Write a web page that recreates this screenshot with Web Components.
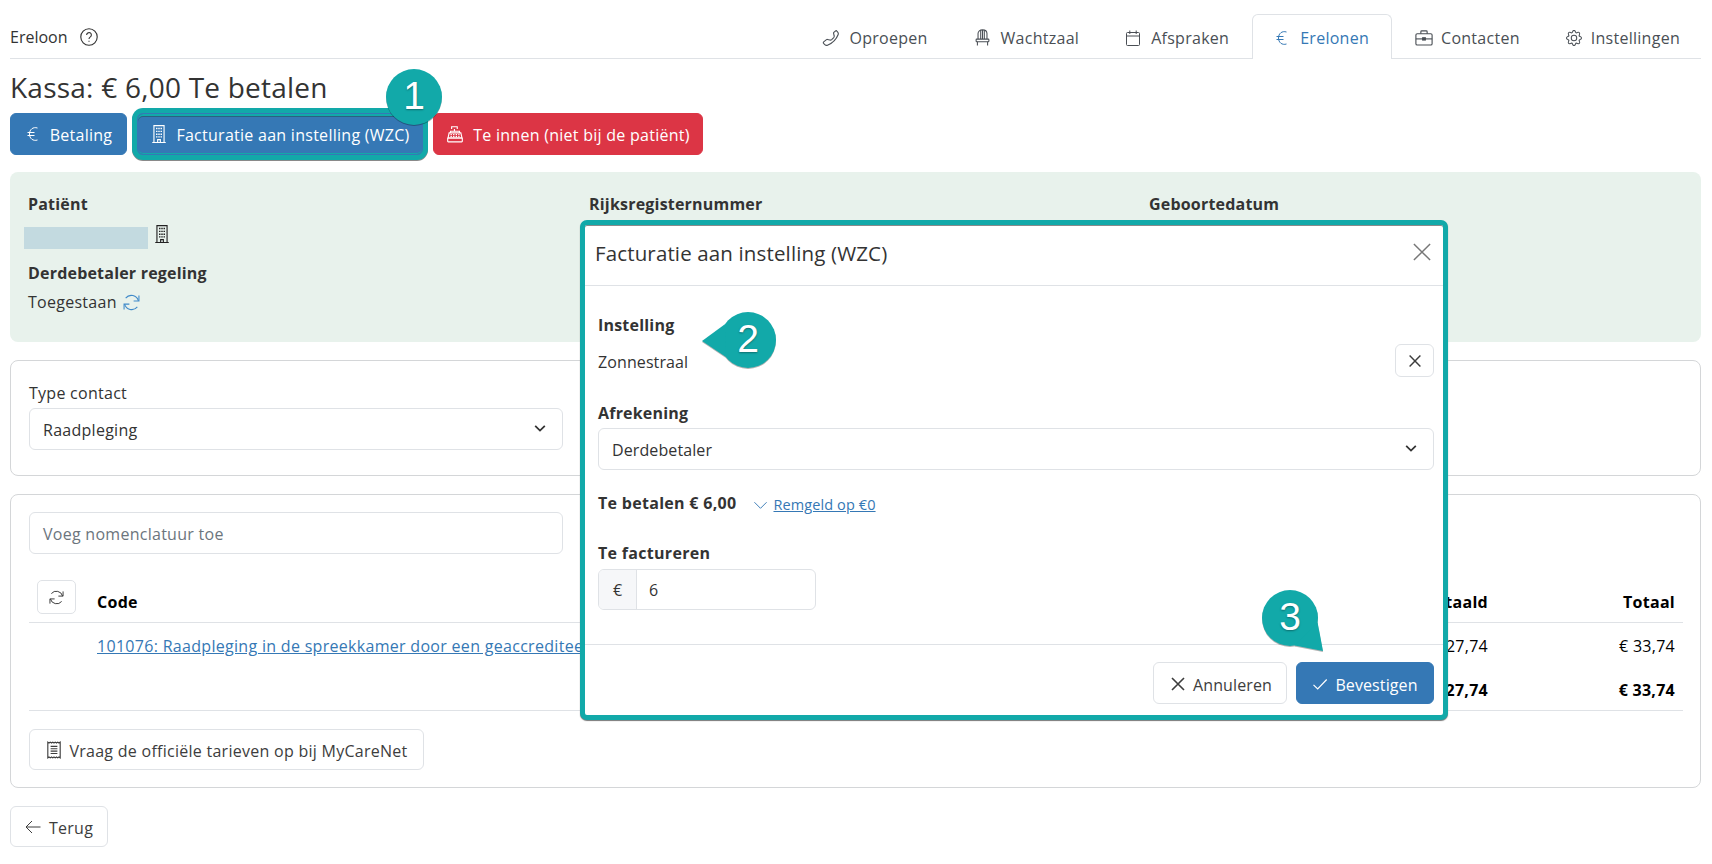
<!DOCTYPE html>
<html lang="nl">
<head>
<meta charset="utf-8">
<title>Ereloon</title>
<style>
    html, body { margin: 0; padding: 0; background: #fff; }
    body {
        position: relative;
        height: 864px;
        overflow: hidden;
        font: 16px/24px "Open Sans", "Noto Sans", sans-serif;
        letter-spacing: .27px;
        color: #333;
    }
</style>
</head>
<body>
<kassa-page></kassa-page>
<script>
const ICONS = {
    help: `<circle cx="8" cy="8" r="7.3"/><path d="M5.900 6.200a2.100 2.100 0 1 1 3.300 1.700c-.8.6-1.200 1-1.200 1.900"/><path d="M8 11.400v.9"/>`,
    phone: `<path transform="translate(16 0) scale(-1 1)" d="M3.300 1.400 2.200 2.500c-.7.7-.9 1.600-.6 2.400a17 17 0 0 0 9.500 9.500c.8.3 1.700.1 2.400-.6l1.100-1.100a.9.9 0 0 0-.1-1.300l-2.500-1.900a.9.9 0 0 0-.8-.2l-2.200.5a1.700 1.700 0 0 1-1.600-.4L5.600 7.600a1.700 1.700 0 0 1-.4-1.600l.5-2.200a.9.9 0 0 0-.2-.8L3.600 1.500a.2.2 0 0 0-.3-.1z"/>`,
    chair: `<path d="M3.800 9.500V4.300C3.800 2.200 5.600.8 8 .8s4.200 1.400 4.200 3.500v5.200"/><path d="M6.300 1.200v8.300M9.700 1.200v8.300M8 1v8.500"/><rect x="2" y="9.500" width="12" height="2.500" rx=".6"/><path d="M3.200 12v3.500M12.800 12v3.500"/>`,
    calendar: `<rect x="1.500" y="2.500" width="13" height="13" rx="1"/><path d="M1.500 6h13M4.800 .5v3.500M11.200 .5v3.500"/>`,
    euro: `<path d="M12.500 2C8 .6 4.500 3.500 4.500 8s3.500 7.400 8 6"/><path d="M2.500 6.500h7M2.500 9.500h7"/>`,
    briefcase: `<rect x=".8" y="4.200" width="14.400" height="10" rx="1.200"/><path d="M5.200 4.200V2.500c0-.5.3-.8.8-.8h4c.5 0 .8.3.8.8v1.700"/><path d="M.8 8.800h14.400"/><rect x="6.800" y="7.800" width="2.400" height="2" fill="currentColor"/>`,
    building: `<path d="M3.500 15.500V.5h9v15M2 15.500h12"/><path d="M6.800 15.500V13h2.400v2.500"/><path stroke-dasharray="1.300 1.200" stroke-width="1.300" d="M6 2.500v8.500M8 2.500v8.500M10 2.500v8.500"/>`,
    register: `<path d="M4 7V5.500h8V7"/><path d="M5 3.500v-2h5v2M7.500 3.500v2"/><path d="M2.800 7h10.400l1 4.500H1.800z"/><rect x="1.500" y="11.500" width="13" height="3.500" rx=".5"/><path stroke-dasharray="1.200 1.100" stroke-width="1.200" d="M4 8.600h8M4 10.300h8"/>`,
    refresh: `<path d="M14.500 6.500A6.900 6.900 0 0 0 2.500 3.800"/><path d="M1.500 9.500A6.900 6.900 0 0 0 13.500 12.200"/><path d="M15 1.500v5h-5M1 14.500v-5h5"/>`,
    receipt: `<path d="M2.500 1l1.100.8L4.700 1l1.100.8L6.900 1 8 1.800 9.100 1l1.100.8 1.100-.8 1.100.8 1.100-.8v14l-1.100-.8-1.100.8-1.100-.8-1.100.8-1.100-.8-1.100.8-1.100-.8-1.100.8-1.100-.8-1.100.8z"/><path d="M5 4.800h6M5 6.900h6M5 9h6M5 11.100h6"/>`,
    x: `<path stroke-width="1.300" d="M3.200 3.200l9.600 9.600M12.800 3.200l-9.600 9.600"/>`,
    "x-full": `<path stroke-width="1.300" d="M.8.8l14.400 14.400M15.200.8.800 15.200"/>`,
    check: `<path stroke-width="1.200" d="M1.500 8.800l4.200 4.200 9-9.500"/>`,
    "arrow-left": `<path d="M15.500 8H1M7 2 1 8l6 6"/>`,
    chevron: `<path d="M1.500 4.500 8 11l6.500-6.500"/>`,
    "chevron-bold": `<path stroke-width="2" d="M2.500 5.500 8 11l5.500-5.500"/>`,
    gear: `<path fill="currentColor" stroke="none" d="M8 4.754a3.246 3.246 0 1 0 0 6.492 3.246 3.246 0 0 0 0-6.492M5.754 8a2.246 2.246 0 1 1 4.492 0 2.246 2.246 0 0 1-4.492 0"/><path fill="currentColor" stroke="none" d="M9.796 1.343c-.527-1.790-3.065-1.790-3.592 0l-.094.319a.873.873 0 0 1-1.255.520l-.292-.160c-1.640-.892-3.433.902-2.540 2.541l.159.292a.873.873 0 0 1-.520 1.255l-.319.094c-1.790.527-1.790 3.065 0 3.592l.319.094a.873.873 0 0 1 .520 1.255l-.160.292c-.892 1.640.901 3.434 2.541 2.540l.292-.159a.873.873 0 0 1 1.255.520l.094.319c.527 1.790 3.065 1.790 3.592 0l.094-.319a.873.873 0 0 1 1.255-.520l.292.160c1.640.893 3.434-.902 2.540-2.541l-.159-.292a.873.873 0 0 1 .520-1.255l.319-.094c1.790-.527 1.790-3.065 0-3.592l-.319-.094a.873.873 0 0 1-.520-1.255l.160-.292c.893-1.640-.902-3.433-2.541-2.540l-.292.159a.873.873 0 0 1-1.255-.520zm-2.633.283c.246-.835 1.428-.835 1.674 0l.094.319a1.873 1.873 0 0 0 2.693 1.115l.291-.160c.764-.415 1.600.420 1.184 1.185l-.159.292a1.873 1.873 0 0 0 1.116 2.692l.318.094c.835.246.835 1.428 0 1.674l-.319.094a1.873 1.873 0 0 0-1.115 2.693l.160.291c.415.764-.420 1.600-1.185 1.184l-.291-.159a1.873 1.873 0 0 0-2.693 1.116l-.094.318c-.246.835-1.428.835-1.674 0l-.094-.319a1.873 1.873 0 0 0-2.692-1.115l-.292.160c-.764.415-1.600-.420-1.184-1.185l.159-.291A1.873 1.873 0 0 0 1.945 8.930l-.319-.094c-.835-.246-.835-1.428 0-1.674l.319-.094A1.873 1.873 0 0 0 3.060 4.377l-.160-.292c-.415-.764.420-1.600 1.185-1.184l.292.159a1.873 1.873 0 0 0 2.692-1.115z"/>`
};

class UiIcon extends HTMLElement {
    constructor() {
        super();
        this.attachShadow({ mode: "open" });
    }
    connectedCallback() {
        const size = this.getAttribute("size") || 16;
        const body = ICONS[this.getAttribute("name")] || "";
        this.shadowRoot.innerHTML = `<style>
            :host { display: inline-flex; flex: none; width: ${size}px; height: ${size}px; }
            svg { width: 100%; height: 100%; display: block; overflow: visible; }
        </style>
        <svg viewBox="0 0 16 16" fill="none" stroke="currentColor" stroke-width="1">${body}</svg>`;
    }
}
customElements.define("ui-icon", UiIcon);

class UiButton extends HTMLElement {
    constructor() {
        super();
        this.attachShadow({ mode: "open" });
    }
    connectedCallback() {
        const icon = this.getAttribute("icon");
        const gap = this.getAttribute("gap") || 8;
        const size = this.getAttribute("size") || 16;
        this.shadowRoot.innerHTML = `<style>
            :host {
                display: inline-flex;
                box-sizing: border-box;
                align-items: center;
                justify-content: center;
                gap: ${gap}px;
                height: 42px;
                padding: 2px 12px 0;
                border: 1px solid #dfe2e6;
                border-radius: 6px;
                background: #fff;
                color: #3d3d3d;
                white-space: nowrap;
            }
            :host([variant="primary"]) { background: #3578b5; border-color: #3578b5; color: #fff; }
            :host([variant="danger"]) { background: #dc3545; border-color: #dc3545; color: #fff; }
            :host([marked]) {
                box-shadow: inset 0 2px 0 #12a9a9, inset 0 3px 0 #2a6180, inset 0 -1px 0 #12a9a9,
                    0 0 0 5px #12a9a9, 0 1px 0 5px #8a8a8a;
            }
            ui-icon { margin-top: -2px; }
        </style>
        ${icon ? `<ui-icon name="${icon}" size="${size}"></ui-icon>` : ""}<slot></slot>`;
    }
}
customElements.define("ui-button", UiButton);

class NavTab extends HTMLElement {
    constructor() {
        super();
        this.attachShadow({ mode: "open" });
    }
    connectedCallback() {
        const gap = this.getAttribute("gap") || 10;
        this.shadowRoot.innerHTML = `<style>
            :host {
                display: flex;
                align-items: center;
                gap: ${gap}px;
                height: 44px;
                box-sizing: border-box;
                padding: 2px 22px 0 22px;
                margin-bottom: -1px;
                border: 1px solid transparent;
                border-bottom: 0;
                border-radius: 6px 6px 0 0;
                color: #4a4f55;
                white-space: nowrap;
            }
            :host([active]) {
                color: #3578b5;
                background: #fff;
                border-color: #dfe2e6;
                height: 45px;
                padding-left: 21px;
            }
        </style>
        <ui-icon name="${this.getAttribute("icon")}" size="${this.getAttribute("size") || 16}"></ui-icon><slot></slot>`;
    }
}
customElements.define("nav-tab", NavTab);

class TopBar extends HTMLElement {
    constructor() {
        super();
        this.attachShadow({ mode: "open" });
    }
    connectedCallback() {
        this.shadowRoot.innerHTML = `<style>
            :host {
                display: flex;
                justify-content: space-between;
                align-items: flex-end;
                height: 45px;
                box-sizing: content-box;
                border-bottom: 1px solid #dfe2e6;
            }
            .brand { display: flex; align-items: center; gap: 12px; height: 42px; letter-spacing: 0; color: #333; font-weight: 500; }
            nav { display: flex; margin-right: -2px; }
        </style>
        <div class="brand"><span>Ereloon</span><ui-icon name="help" size="18"></ui-icon></div>
        <nav><slot></slot></nav>`;
    }
}
customElements.define("top-bar", TopBar);

class InfoField extends HTMLElement {
    constructor() {
        super();
        this.attachShadow({ mode: "open" });
    }
    connectedCallback() {
        this.shadowRoot.innerHTML = `<style>
            :host { display: block; }
            .label { font-weight: 700; color: #333; letter-spacing: .2px; }
        </style>
        <div class="label">${this.getAttribute("label")}</div>
        <slot></slot>`;
    }
}
customElements.define("info-field", InfoField);

class PatientPanel extends HTMLElement {
    constructor() {
        super();
        this.attachShadow({ mode: "open" });
    }
    connectedCallback() {
        this.shadowRoot.innerHTML = `<style>
            :host {
                display: grid;
                grid-template-columns: 561px 560px 1fr;
                box-sizing: border-box;
                height: 170px;
                margin-top: 17px;
                padding: 20px 18px;
                border-radius: 8px;
                background: #e8f2ec;
            }
            .patient { display: flex; align-items: flex-start; gap: 5px; margin: 11px 0 12px -4px; height: 22px; color: #222; }
            .blur { width: 124px; height: 22px; background: #c3dae0; }
            .patient ui-icon { margin-top: -2px; }
            .status { display: flex; align-items: center; gap: 6px; margin-top: 5px; }
            .status ui-icon { color: #3f8ac9; }
        </style>
        <div>
            <info-field label="Patiënt">
                <div class="patient"><div class="blur"></div><ui-icon name="building" size="18"></ui-icon></div>
            </info-field>
            <info-field label="Derdebetaler regeling">
                <div class="status"><span>Toegestaan</span><ui-icon name="refresh" size="17"></ui-icon></div>
            </info-field>
        </div>
        <info-field label="Rijksregisternummer"></info-field>
        <info-field label="Geboortedatum"></info-field>`;
    }
}
customElements.define("patient-panel", PatientPanel);

class FormBox extends HTMLElement {
    constructor() {
        super();
        this.attachShadow({ mode: "open" });
    }
    connectedCallback() {
        const chevron = this.hasAttribute("select") ? `<ui-icon name="chevron-bold" size="14"></ui-icon>` : "";
        this.shadowRoot.innerHTML = `<style>
            :host {
                display: flex;
                align-items: center;
                justify-content: space-between;
                box-sizing: border-box;
                height: 42px;
                padding: 2px 15px 0 13px;
                border: 1px solid #dfe2e6;
                border-radius: 6px;
                background: #fff;
                color: #333;
            }
            :host([muted]) { color: #6c757d; }
            ui-icon { margin-top: -4px; }
        </style>
        <slot></slot>${chevron}`;
    }
}
customElements.define("form-box", FormBox);

class UiCard extends HTMLElement {
    constructor() {
        super();
        this.attachShadow({ mode: "open" });
    }
    connectedCallback() {
        this.shadowRoot.innerHTML = `<style>
            :host {
                display: block;
                box-sizing: border-box;
                padding: 17px 18px;
                border: 1px solid #d4d6d8;
                border-radius: 8px;
                background: #fff;
            }
        </style>
        <slot></slot>`;
    }
}
customElements.define("ui-card", UiCard);

class FeeTable extends HTMLElement {
    constructor() {
        super();
        this.attachShadow({ mode: "open" });
    }
    connectedCallback() {
        this.shadowRoot.innerHTML = `<style>
            :host {
                display: grid;
                grid-template-columns: 68px 1fr 200px 187px;
                grid-template-rows: 43px 45px 43px;
                margin: 26px -1px 0 0;
                color: #000;
            }
            .cell { display: flex; align-items: center; white-space: nowrap; overflow: hidden; }
            .head { align-items: flex-end; border-bottom: 1px solid #dfe2e6; font-weight: 700; padding-bottom: 8px; box-sizing: border-box; }
            .total { border-bottom: 1px solid #dfe2e6; font-weight: 700; padding-top: 2px; box-sizing: border-box; }
            .num { justify-content: flex-end; padding-right: 8px; }
            .tool { padding-left: 8px; align-items: flex-start; padding-bottom: 0; }
            .tool div {
                display: flex; align-items: center; justify-content: center;
                width: 39px; height: 34px; box-sizing: border-box;
                border: 1px solid #dfe2e6; border-radius: 5px; color: #333;
            }
            a { color: #3578b5; text-decoration: underline; letter-spacing: .3px; }
        </style>
        <div class="cell head tool"><div><ui-icon name="refresh" size="15"></ui-icon></div></div>
        <div class="cell head">Code</div>
        <div class="cell head num">Terugbetaald</div>
        <div class="cell head num">Totaal</div>
        <div class="cell"></div>
        <div class="cell"><a>101076: Raadpleging in de spreekkamer door een geaccrediteerde huisarts</a></div>
        <div class="cell num">€ 27,74</div>
        <div class="cell num">€ 33,74</div>
        <div class="cell total"></div>
        <div class="cell total"></div>
        <div class="cell total num">€ 27,74</div>
        <div class="cell total num">€ 33,74</div>`;
    }
}
customElements.define("fee-table", FeeTable);

class InvoiceModal extends HTMLElement {
    constructor() {
        super();
        this.attachShadow({ mode: "open" });
    }
    connectedCallback() {
        this.shadowRoot.innerHTML = `<style>
            :host {
                position: absolute;
                left: 580px;
                top: 220px;
                width: 868px;
                height: 500px;
                box-sizing: border-box;
                display: flex;
                flex-direction: column;
                border: 5px solid #12a9a9;
                border-radius: 7px;
                background: #fff;
                letter-spacing: .1px;
                box-shadow: inset 0 1px 0 #8a8a8a, 0 1px 1px #777;
            }
            header {
                display: flex;
                align-items: center;
                justify-content: space-between;
                box-sizing: border-box;
                height: 61px;
                padding: 0 12px 4px 10px;
                border-bottom: 1px solid #dfe2e6;
                font-size: 20.500px;
                letter-spacing: .14px;
                color: #333;
            }
            header ui-icon { color: #777; margin-top: -3px; }
            main { flex: 1; padding: 27px 9px 0 13px; }
            b { display: block; font-weight: 700; letter-spacing: .2px; }
            .row { display: flex; align-items: center; justify-content: space-between; margin-top: 7px; height: 33px; }
            .row span { padding-top: 3px; }
            .square { width: 39px; height: 33px; padding: 0; }
            .square ui-icon { margin: 0; }
            .afrekening { margin-top: 24px; }
            .afrekening b { margin-bottom: 3px; }
            .pay { display: flex; align-items: center; margin-top: 18px; }
            .pay b, .invoice b { letter-spacing: .3px; }
            .pay a { display: flex; align-items: center; margin-left: 17px; padding-top: 5px; color: #3578b5; font-size: 14.500px; }
            .pay a span { text-decoration: underline; margin-left: 5px; }
            .invoice { margin-top: 24px; }
            .group {
                display: flex;
                width: 218px;
                height: 41px;
                margin-top: 4px;
                box-sizing: border-box;
                border: 1px solid #dfe2e6;
                border-radius: 6px;
                overflow: hidden;
            }
            .group i { display: flex; align-items: center; justify-content: center; width: 37px; background: #f6f7f9; border-right: 1px solid #dfe2e6; font-style: normal; }
            .group span { display: flex; align-items: center; padding-left: 12px; }
            footer {
                display: flex;
                justify-content: flex-end;
                gap: 9px;
                padding: 17px 9px 11px;
                border-top: 1px solid #dfe2e6;
            }
            footer ui-button { padding-top: 3px; }
        </style>
        <header><span>Facturatie aan instelling (WZC)</span><ui-icon name="x-full" size="18"></ui-icon></header>
        <main>
            <b>Instelling</b>
            <div class="row"><span>Zonnestraal</span><ui-button class="square"><ui-icon name="x" size="18"></ui-icon></ui-button></div>
            <div class="afrekening"><b>Afrekening</b><form-box select>Derdebetaler</form-box></div>
            <div class="pay"><b>Te betalen € 6,00</b><a><ui-icon name="chevron" size="15"></ui-icon><span>Remgeld op €0</span></a></div>
            <div class="invoice"><b>Te factureren</b><div class="group"><i>€</i><span>6</span></div></div>
        </main>
        <footer>
            <ui-button icon="x" size="20" style="width:134px" gap="5">Annuleren</ui-button>
            <ui-button icon="check" variant="primary" style="width:138px" gap="7">Bevestigen</ui-button>
        </footer>`;
    }
}
customElements.define("invoice-modal", InvoiceModal);

class StepCallout extends HTMLElement {
    constructor() {
        super();
        this.attachShadow({ mode: "open" });
    }
    connectedCallback() {
        const r = 28;
        let tip = "";
        if (this.hasAttribute("tip")) {
            const [dx, dy] = this.getAttribute("tip").split(",").map(Number);
            const angle = Math.atan2(dy, dx);
            const spread = 0.62;
            const base = [angle - spread, angle + spread]
                .map(a => `${r + r * Math.cos(a)},${r + r * Math.sin(a)}`);
            tip = `<polygon points="${base[0]} ${r + dx},${r + dy} ${base[1]}" fill="#12a9a9"/>`;
        }
        this.shadowRoot.innerHTML = `<style>
            :host {
                position: absolute;
                left: ${this.getAttribute("x")}px;
                top: ${this.getAttribute("y")}px;
                width: 56px;
                height: 56px;
                display: flex;
                align-items: center;
                justify-content: center;
                font: 39px/56px "Liberation Sans", Arial, sans-serif;
                letter-spacing: 0;
                color: #fff;
                text-shadow: 0 1px 2px rgba(0,0,0,.35);
            }
            svg { position: absolute; inset: 0; overflow: visible; filter: drop-shadow(0 1px 0 rgba(0,0,0,.3)); }
            span { position: relative; top: -1px; }
        </style>
        <svg width="56" height="56" viewBox="0 0 56 56"><circle cx="${r}" cy="${r}" r="${r}" fill="#12a9a9"/>${tip}</svg>
        <span>${this.getAttribute("step")}</span>`;
    }
}
customElements.define("step-callout", StepCallout);

class KassaPage extends HTMLElement {
    constructor() {
        super();
        this.attachShadow({ mode: "open" });
    }
    connectedCallback() {
        this.shadowRoot.innerHTML = `<style>
            :host { display: block; padding: 13px 11px 0 10px; }
            h1 { margin: 11px 0 9px; font-weight: 400; font-size: 28px; line-height: 34px; letter-spacing: .23px; color: #333; }
            .actions { display: flex; gap: 10px; }
            .contact { height: 116px; margin-top: 18px; padding-top: 20px; }
            .nomen { height: 294px; margin-top: 18px; }
            .half { width: 534px; }
            .mc { margin-top: 18px; height: 41px; width: 395px; }
            .terug { margin-top: 18px; display: flex; }
            .terug ui-button { height: 41px; width: 98px; }
            .mc-row { display: flex; }
            .type { display: block; margin-bottom: 3px; }
        </style>
        <top-bar>
            <nav-tab icon="phone" size="18" gap="9">Oproepen</nav-tab>
            <nav-tab icon="chair" size="17">Wachtzaal</nav-tab>
            <nav-tab icon="calendar">Afspraken</nav-tab>
            <nav-tab icon="euro" active>Erelonen</nav-tab>
            <nav-tab icon="briefcase" size="18" gap="8">Contacten</nav-tab>
            <nav-tab icon="gear" gap="9">Instellingen</nav-tab>
        </top-bar>
        <h1>Kassa: € 6,00 Te betalen</h1>
        <div class="actions">
            <ui-button icon="euro" gap="9" variant="primary" style="width:117px">Betaling</ui-button>
            <ui-button icon="building" size="18" gap="8" variant="primary" marked style="width:286px">Facturatie aan instelling (WZC)</ui-button>
            <ui-button icon="register" size="18" gap="9" variant="danger" style="width:270px">Te innen (niet bij de patiënt)</ui-button>
        </div>
        <patient-panel></patient-panel>
        <ui-card class="contact">
            <span class="type">Type contact</span>
            <form-box class="half" select>Raadpleging</form-box>
        </ui-card>
        <ui-card class="nomen">
            <form-box class="half" muted>Voeg nomenclatuur toe</form-box>
            <fee-table></fee-table>
            <div class="mc-row"><ui-button class="mc" icon="receipt" size="18" gap="6">Vraag de officiële tarieven op bij MyCareNet</ui-button></div>
        </ui-card>
        <div class="terug"><ui-button icon="arrow-left">Terug</ui-button></div>
        <invoice-modal></invoice-modal>
        <step-callout step="1" x="386" y="69"></step-callout>
        <step-callout step="2" x="720" y="312" tip="-46,1"></step-callout>
        <step-callout step="3" x="1262" y="590" tip="33,33"></step-callout>`;
    }
}
customElements.define("kassa-page", KassaPage);
</script>
</body>
</html>
